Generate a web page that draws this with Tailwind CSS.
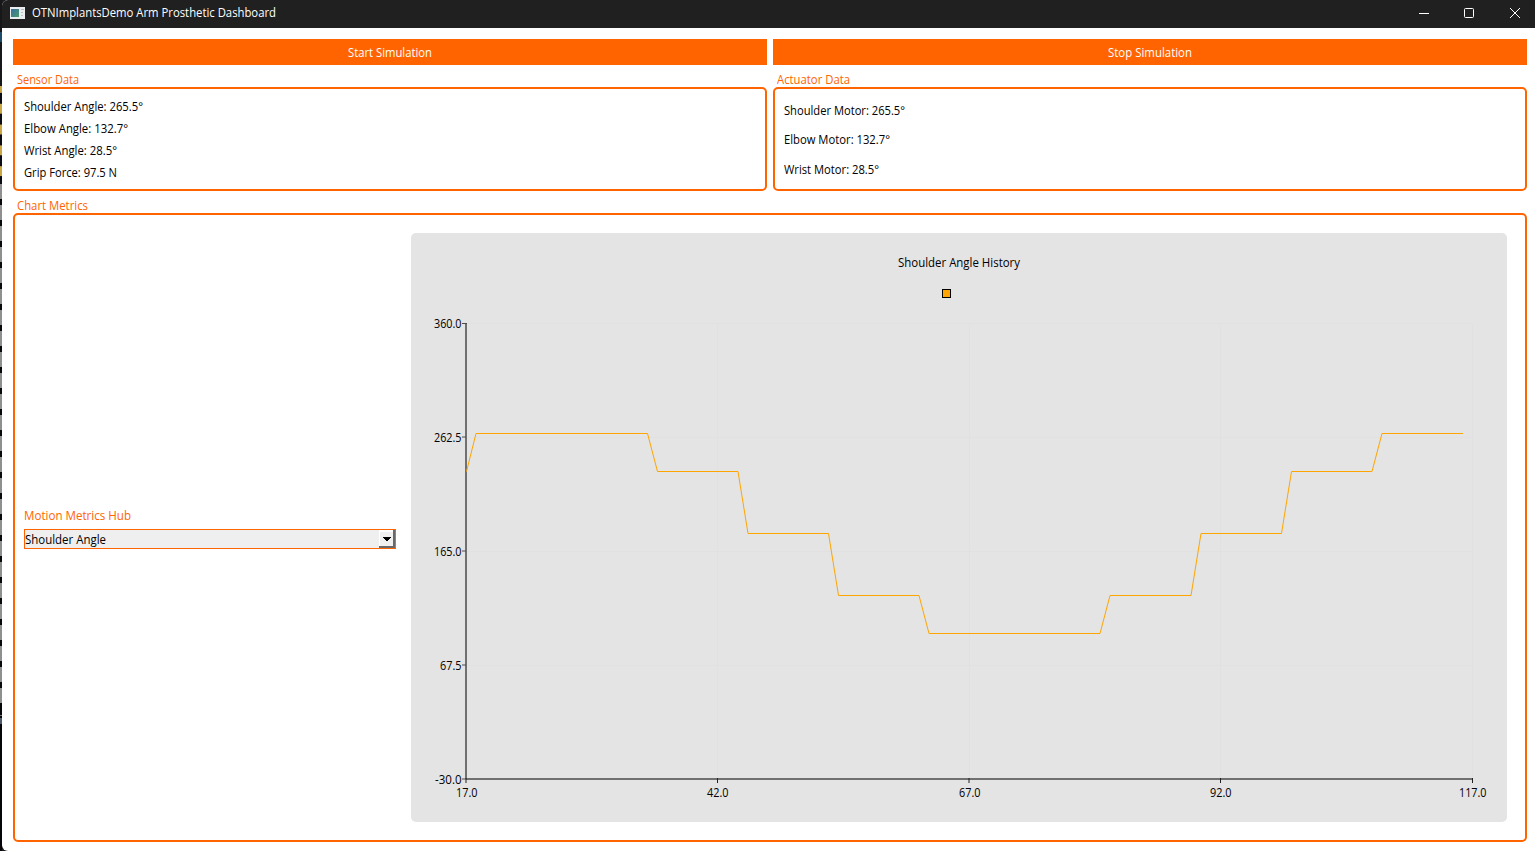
<!DOCTYPE html>
<html lang="en">
<head>
<meta charset="utf-8">
<title>OTNImplantsDemo Arm Prosthetic Dashboard</title>
<script src="https://cdn.jsdelivr.net/npm/@tailwindcss/browser@4"></script>
</head>
<body class="w-[1535px] h-[851px] overflow-hidden bg-[#1b1b1d] font-['Open_Sans',sans-serif] text-[12px] leading-4 text-black">
<div class="flex h-[851px]">
  <!-- desktop showing past the window's left edge -->
  <svg class="w-[2px] h-[851px] shrink-0" viewBox="0 0 2 851" shape-rendering="crispEdges">
    <defs>
      <pattern id="y" width="2" height="20.8" y="81" patternUnits="userSpaceOnUse"><rect width="2" height="20.8" fill="#0c0c14"/><rect y="2" width="2" height="10" fill="#c9a544"/></pattern>
      <pattern id="g" width="2" height="21" y="199" patternUnits="userSpaceOnUse"><rect width="2" height="21" fill="#8f8f8f"/><rect width="2" height="6" fill="#08080c"/></pattern>
    </defs>
    <rect width="2" height="851" fill="#17171a"/>
    <rect y="32" width="2" height="10" fill="#1d4a66"/>
    <rect y="86" width="2" height="98" fill="url(#y)"/>
    <rect y="184" width="2" height="519" fill="url(#g)"/>
    <rect y="703" width="2" height="148" fill="#05050a"/>
    <rect y="715" width="2" height="1" fill="#777"/><rect y="718" width="2" height="6" fill="#4c5a6c"/>
  </svg>
  <main class="w-[1533px] flex flex-col bg-white rounded-l-[6px] overflow-hidden">
    <header class="h-[28px] shrink-0 bg-[#202020] text-white flex items-center pl-2 pb-[3px]">
      <svg class="w-[15px] h-[12px] shrink-0" viewBox="0 0 15 12" shape-rendering="crispEdges">
        <defs><linearGradient id="ic" x1="0" y1="0" x2="1" y2="1"><stop stop-color="#3b6fa0"/><stop offset="1" stop-color="#4b9a6c"/></linearGradient></defs>
        <rect width="15" height="12" fill="#e9edf0"/><rect x="1" y="2" width="8" height="8" fill="url(#ic)"/>
        <rect x="11" y="2" width="3" height="1" fill="#b9bfc4"/><rect x="11" y="5" width="2" height="1" fill="#b9bfc4"/><rect x="11" y="8" width="2" height="1" fill="#b9bfc4"/>
      </svg>
      <svg class="ml-[7px] w-[250px] h-5 shrink-0" fill="white"><text y="14" textLength="244" lengthAdjust="spacingAndGlyphs">OTNImplantsDemo Arm Prosthetic Dashboard</text></svg>
      <svg class="ml-auto mr-[14px] w-[102px] h-[12px]" fill="none" stroke="white" viewBox="0 0 102 12"><path d="M0 6.5h10"/><rect x="45.5" y="1.5" width="9" height="9" rx="1"/><path d="M91 1l10 10M101 1l-10 10"/></svg>
    </header>
    <div class="grow flex flex-col pl-[11px] pr-2 pt-[11px] pb-[9px]">
      <div class="grid grid-cols-2 gap-1.5 text-white">
        <button class="h-[26px] bg-[#ff6400] flex items-center justify-center"><svg class="w-[84px] h-5" fill="white"><text y="15" textLength="84" lengthAdjust="spacingAndGlyphs">Start Simulation</text></svg></button>
        <button class="h-[26px] bg-[#ff6400] flex items-center justify-center"><svg class="w-[84px] h-5" fill="white"><text y="15" textLength="84" lengthAdjust="spacingAndGlyphs">Stop Simulation</text></svg></button>
      </div>
      <div class="grid grid-cols-2 gap-1.5">
        <section>
          <svg class="block ml-1 w-[100px] h-[22px]" fill="#ff6400"><text y="19" textLength="62" lengthAdjust="spacingAndGlyphs">Sensor Data</text></svg>
          <div class="h-[104px] border-2 border-[#ff6400] rounded-[5px] pl-[9px] pt-[7px]">
            <svg class="block w-[200px] h-[22px]"><text y="15" textLength="119" lengthAdjust="spacingAndGlyphs">Shoulder Angle: 265.5°</text></svg>
            <svg class="block w-[200px] h-[22px]"><text y="15" textLength="104" lengthAdjust="spacingAndGlyphs">Elbow Angle: 132.7°</text></svg>
            <svg class="block w-[200px] h-[22px]"><text y="15" textLength="93" lengthAdjust="spacingAndGlyphs">Wrist Angle: 28.5°</text></svg>
            <svg class="block w-[200px] h-[22px]"><text y="15" textLength="93" lengthAdjust="spacingAndGlyphs">Grip Force: 97.5 N</text></svg>
          </div>
        </section>
        <section>
          <svg class="block ml-1 w-[100px] h-[22px]" fill="#ff6400"><text y="19" textLength="73" lengthAdjust="spacingAndGlyphs">Actuator Data</text></svg>
          <div class="h-[104px] border-2 border-[#ff6400] rounded-[5px] pl-[9px] pt-[7px]">
            <svg class="block w-[200px] h-[29px]"><text y="19" textLength="121" lengthAdjust="spacingAndGlyphs">Shoulder Motor: 265.5°</text></svg>
            <svg class="block w-[200px] h-[30px]"><text y="19" textLength="106" lengthAdjust="spacingAndGlyphs">Elbow Motor: 132.7°</text></svg>
            <svg class="block w-[200px] h-[29px]"><text y="19" textLength="95" lengthAdjust="spacingAndGlyphs">Wrist Motor: 28.5°</text></svg>
          </div>
        </section>
      </div>
      <svg class="block ml-1 w-[100px] h-[22px] shrink-0" fill="#ff6400"><text y="19" textLength="71" lengthAdjust="spacingAndGlyphs">Chart Metrics</text></svg>
      <section class="grow flex border-2 border-[#ff6400] rounded-[5px] pl-[9px] pr-[18px] py-[18px]">
        <div class="w-[372px] mr-[15px] flex flex-col pt-[273px]">
          <svg class="block w-[150px] h-[23px]" fill="#ff6400"><text y="14" textLength="107" lengthAdjust="spacingAndGlyphs">Motion Metrics Hub</text></svg>
          <div class="h-5 border border-[#ff6400] bg-[#efefef] flex justify-between">
            <svg class="w-[100px] h-[18px]"><text y="14" textLength="81" lengthAdjust="spacingAndGlyphs">Shoulder Angle</text></svg>
            <svg class="w-4 h-[18px]" viewBox="0 0 16 18" shape-rendering="crispEdges"><rect width="16" height="18" fill="#696969"/><rect width="14" height="16" fill="#fff"/><rect x="1" y="2" width="13" height="14" fill="#f0f0f0"/><path d="M4 7h8v1h-1v1h-1v1h-1v1H7v-1H6V9H5V8H4z" fill="black"/></svg>
          </div>
        </div>
        <div class="w-[1096px] h-[589px] bg-[#e4e4e4] rounded-[5px]">
          <svg class="block w-[1096px] h-[589px]" viewBox="411 233 1096 589">
            <path d="M467 323.5h1006M467 437.5h1006M467 551.5h1006M467 665.5h1006M717.5 323v456M969.5 323v456M1220.5 323v456M1472.5 323v456" stroke="#e1e1e1" fill="none"/>
            <text x="898" y="267" textLength="122" lengthAdjust="spacingAndGlyphs">Shoulder Angle History</text>
            <rect x="942.5" y="289.5" width="8" height="8" fill="#ffa500" stroke="black"/>
            <path d="M466 323v456M466 779h1006" stroke="#707070" stroke-width="2" fill="none"/>
            <path d="M462 323.5h5M462 437h4M462 551h4M462 665h4M462 779h5" stroke="#4c4c4c" fill="none"/>
            <path d="M466 778v5M717.5 778v5M969 778v5M1220.5 778v5M1472.5 778v5" stroke="#222" fill="none"/>
            <path d="M466.500 471.500L476 433.500H647.500L657.500 471.500H738L748 533.500H828.500L838.500 595.500H919L929 633.500H1100L1110 595.500H1191L1201 533.500H1281.500L1291.500 471.500H1372L1382 433.500H1463" fill="none" stroke="#ffa500"/>
            <text x="434" y="328" textLength="27.500" lengthAdjust="spacingAndGlyphs">360.0</text><text x="434" y="442" textLength="27.500" lengthAdjust="spacingAndGlyphs">262.5</text><text x="434" y="556" textLength="27.500" lengthAdjust="spacingAndGlyphs">165.0</text><text x="440" y="670" textLength="21.500" lengthAdjust="spacingAndGlyphs">67.5</text><text x="435" y="784" textLength="26.500" lengthAdjust="spacingAndGlyphs">-30.0</text>
            <text x="456" y="797" textLength="21.500" lengthAdjust="spacingAndGlyphs">17.0</text><text x="707" y="797" textLength="21.500" lengthAdjust="spacingAndGlyphs">42.0</text><text x="959" y="797" textLength="21.500" lengthAdjust="spacingAndGlyphs">67.0</text><text x="1210" y="797" textLength="21.500" lengthAdjust="spacingAndGlyphs">92.0</text><text x="1459" y="797" textLength="27.500" lengthAdjust="spacingAndGlyphs">117.0</text>
          </svg>
        </div>
      </section>
    </div>
  </main>
</div>
</body>
</html>
